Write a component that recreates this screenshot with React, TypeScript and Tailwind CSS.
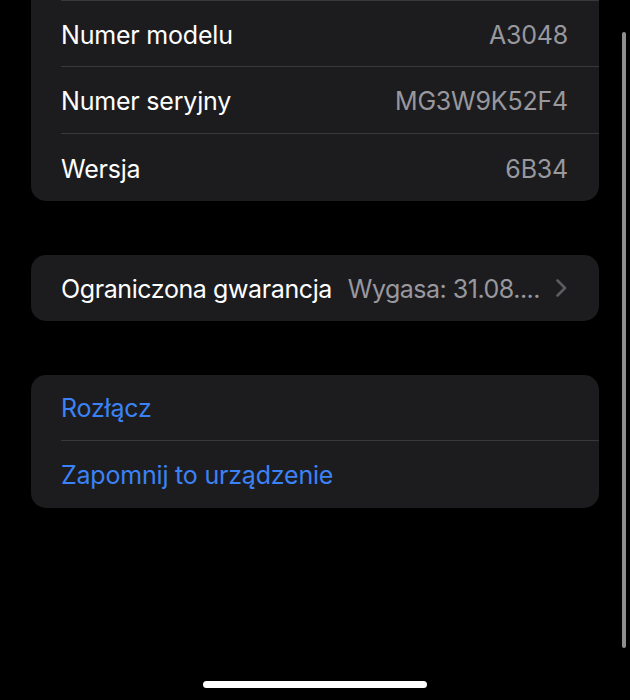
import React from "react";

const font = { fontFamily: 'Inter, "Noto Sans", sans-serif' };

function Row({ label, value, first, last }: { label: string; value: string; first?: boolean; last?: boolean }) {
  return (
    <div className={"ml-[30px] flex h-[67px] items-center pr-[31px] pt-[4px] " + (last ? "" : "border-b border-[#38383a]") + (first ? " border-t border-t-[#38383a]" : "")}>
      <span className="text-[25px] tracking-[-0.2px] text-white">{label}</span>
      <span className="ml-auto text-[25px] tracking-[-0.2px] text-[#98989e]">{value}</span>
    </div>
  );
}

export default function App() {
  return (
    <div className="relative h-[700px] w-[630px] overflow-hidden bg-black" style={font}>
      <div className="flex flex-col gap-[54px] px-[31px]">
        <div className="-mt-[14px] overflow-hidden rounded-b-[15px] bg-[#1c1c1e] pt-[14px]">
          <Row label="Numer modelu" value="A3048" first />
          <Row label="Numer seryjny" value="MG3W9K52F4" />
          <Row label="Wersja" value="6B34" last />
        </div>

        <div className="flex h-[66px] items-center rounded-[15px] bg-[#1c1c1e] pl-[30px] pr-[31px] pt-[3px]">
          <span className="text-[25px] tracking-[-0.4px] text-white">Ograniczona gwarancja</span>
          <span className="ml-auto text-[25px] tracking-[-0.5px] text-[#98989e]">Wygasa: 31.08....</span>
          <svg width="13" height="18" viewBox="0 0 13 18" className="-mt-[3px] ml-[15px]">
            <path d="M2.5 1.5 L10 9 L2.5 16.5" fill="none" stroke="#5c5c60" strokeWidth="2.6" strokeLinecap="round" strokeLinejoin="round" />
          </svg>
        </div>

        <div className="rounded-[15px] bg-[#1c1c1e]">
          <div className="ml-[30px] flex h-[66px] items-center border-b border-[#38383a] pt-[3px]">
            <span className="text-[25px] tracking-[-0.2px] text-[#3b82f6]">Rozłącz</span>
          </div>
          <div className="ml-[30px] flex h-[67px] items-center pt-[3px]">
            <span className="text-[25px] tracking-[-0.2px] text-[#3b82f6]">Zapomnij to urządzenie</span>
          </div>
        </div>
      </div>

      <div className="absolute left-[622px] top-[32px] h-[616px] w-[4px] rounded-full bg-[#8e8e93]" />
      <div className="absolute left-[203px] top-[681px] h-[7px] w-[224px] rounded-full bg-white" />
    </div>
  );
}
